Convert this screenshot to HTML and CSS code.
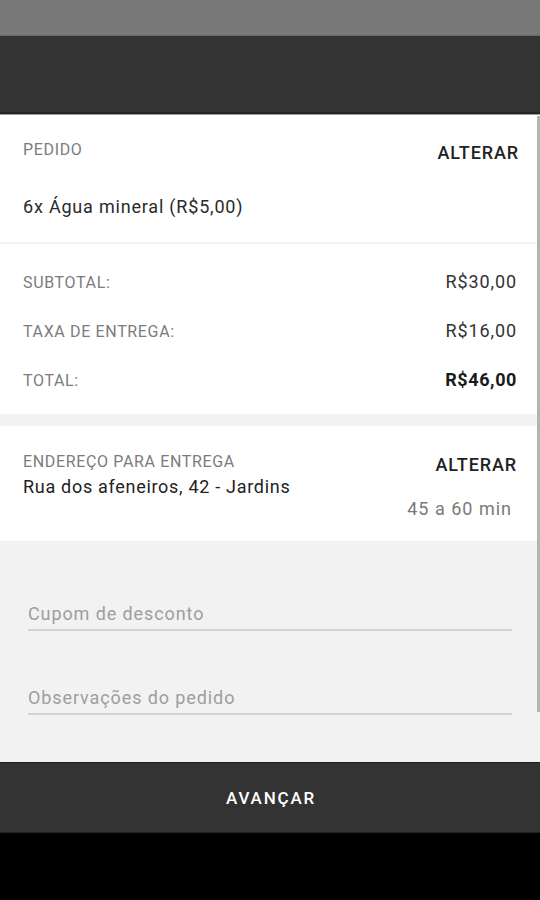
FILE: index.html
```html
<!DOCTYPE html>
<html lang="pt-BR">
<head>
    <meta charset="UTF-8">
    <meta name="viewport" content="width=device-width, initial-scale=1.0">
    <title>Resumo do pedido</title>
    <link rel="stylesheet" href="styles.css">
</head>
<body>
    <div class="screen">
        <div class="status_bar"></div>
        <div class="app_bar"></div>

        <div class="content">
            <div class="scroll_thumb"></div>

            <div class="card order_card">
                <div class="card_head">
                    <span class="label">PEDIDO</span>
                    <span class="action">ALTERAR</span>
                </div>
                <div class="order_item">6x Água mineral (R$5,00)</div>
            </div>

            <div class="card totals_card">
                <div class="total_row">
                    <span class="label">SUBTOTAL:</span>
                    <span class="value">R$30,00</span>
                </div>
                <div class="total_row">
                    <span class="label">TAXA DE ENTREGA:</span>
                    <span class="value">R$16,00</span>
                </div>
                <div class="total_row">
                    <span class="label">TOTAL:</span>
                    <span class="value strong">R$46,00</span>
                </div>
            </div>

            <div class="card address_card">
                <div class="address_info">
                    <span class="label">ENDEREÇO PARA ENTREGA</span>
                    <span class="address">Rua dos afeneiros, 42 - Jardins</span>
                </div>
                <div class="address_side">
                    <span class="action">ALTERAR</span>
                    <span class="eta">45 a 60 min</span>
                </div>
            </div>

            <div class="form_section">
                <input type="text" class="field" placeholder="Cupom de desconto">
                <input type="text" class="field" placeholder="Observações do pedido">
            </div>
        </div>

        <div class="footer">
            <button class="next_button">AVANÇAR</button>
        </div>
    </div>
</body>
</html>
```

FILE: styles.css
```css
body {
    margin: 0;
    padding: 0;
    background-color: #000;
    font-family: Roboto, "Liberation Sans", Arial, sans-serif;
}

.screen {
    width: 540px;
    height: 900px;
    display: flex;
    flex-direction: column;
    background-color: #000;
}

.status_bar {
    height: 35px;
    background-color: #787878;
    border-bottom: 1px solid #6a6a6a;
}

.app_bar {
    height: 76px;
    background-color: #333;
    border-bottom: 2px solid #262626;
}

.content {
    position: relative;
    height: 648px;
    background-color: #f2f2f2;
    border-top: 1px solid #9a9a9a;
    box-sizing: border-box;
}

.scroll_thumb {
    position: absolute;
    top: 1px;
    right: 0;
    width: 3px;
    height: 596px;
    background-color: #b4b4b4;
}

.card {
    background-color: #fff;
}

.label {
    font-size: 16px;
    line-height: 20px;
    color: #7c7c7c;
    letter-spacing: 0.65px;
}

.action {
    font-size: 18px;
    line-height: 26px;
    color: #222;
    font-weight: 500;
    letter-spacing: 0.9px;
}

.order_card {
    height: 129px;
    padding: 25px 21px 0 23px;
    box-sizing: border-box;
    border-bottom: 2px solid #f4f4f4;
}

.card_head {
    display: flex;
    justify-content: space-between;
    align-items: flex-start;
}

.order_item {
    margin-top: 29px;
    font-size: 18px;
    line-height: 24px;
    color: #2a2a2a;
    letter-spacing: 0.8px;
}

.totals_card {
    height: 170px;
    padding: 14px 23px 0 23px;
    box-sizing: border-box;
}

.total_row {
    display: flex;
    justify-content: space-between;
    align-items: center;
    height: 49px;
}

.total_row .value {
    font-size: 18px;
    color: #333;
    margin-top: -2px;
    letter-spacing: 0.9px;
}

.total_row .value.strong {
    color: #1a1a1a;
    font-weight: 700;
    letter-spacing: 0.6px;
}

.address_card {
    margin-top: 12px;
    height: 115px;
    padding: 26px 23px 0 23px;
    box-sizing: border-box;
    display: flex;
    justify-content: space-between;
}

.address_info,
.address_side {
    display: flex;
    flex-direction: column;
}

.address_side {
    align-items: flex-end;
}

.address {
    margin-top: 3px;
    font-size: 18px;
    line-height: 24px;
    color: #222;
    letter-spacing: 0.7px;
}

.eta {
    margin-top: 19px;
    margin-right: 5px;
    font-size: 18px;
    line-height: 24px;
    color: #7a7a7a;
    letter-spacing: 1px;
}

.form_section {
    display: flex;
    flex-direction: column;
    gap: 54px;
    padding: 60px 28px 0 28px;
}

.field {
    display: block;
    width: 100%;
    box-sizing: border-box;
    padding: 0 0 4px 0;
    font-family: inherit;
    font-size: 18px;
    line-height: 24px;
    height: 30px;
    color: #333;
    letter-spacing: 0.9px;
    background: transparent;
    border: none;
    border-bottom: 2px solid #d2d2d2;
    outline: none;
}

.field::placeholder {
    color: #9e9e9e;
}

.footer {
    height: 71px;
    background-color: #333;
    border-top: 1px solid #1e1e1e;
    box-sizing: border-box;
    border-bottom: 1px solid #222;
}

.next_button {
    display: block;
    width: 100%;
    height: 100%;
    padding: 0 0 0 2px;
    background: transparent;
    border: none;
    color: #fff;
    font-family: inherit;
    font-size: 17px;
    font-weight: 500;
    letter-spacing: 1.8px;
    cursor: pointer;
}
```
